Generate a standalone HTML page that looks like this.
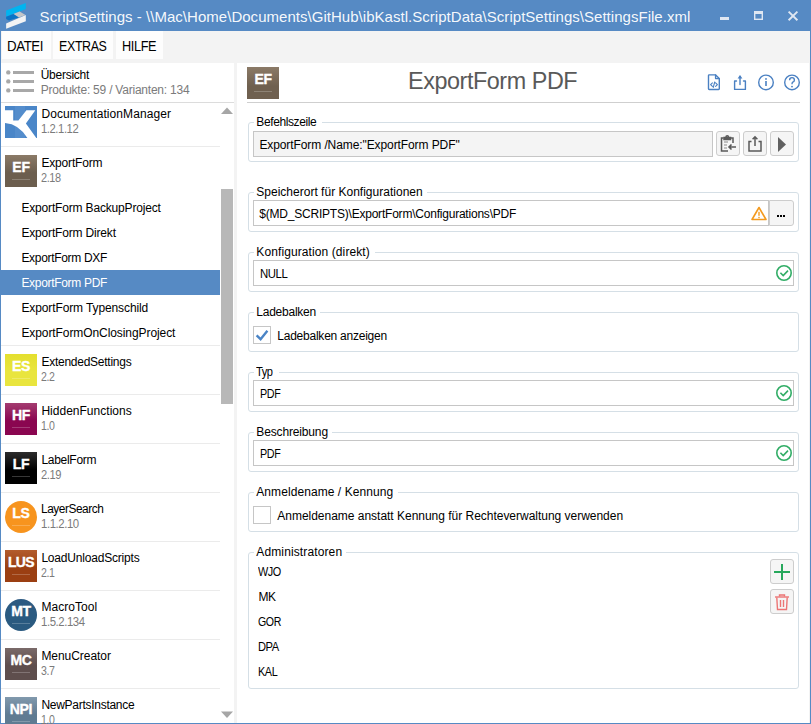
<!DOCTYPE html>
<html><head><meta charset="utf-8">
<style>
html,body{margin:0;padding:0;width:811px;height:724px;overflow:hidden;background:#fff;}
body{position:relative;font-family:"Liberation Sans",sans-serif;}
.a{position:absolute;box-sizing:border-box;}
.t{position:absolute;white-space:pre;font-family:"Liberation Sans",sans-serif;}
.div{position:absolute;height:1px;background:#ebebeb;}
.gb{position:absolute;box-sizing:border-box;border:1px solid #d5dfe6;border-radius:3px;}
.gl{position:absolute;background:#fff;height:12px;}
.inp{position:absolute;box-sizing:border-box;border:1px solid #c6c6c6;background:#fff;}
.btn{position:absolute;box-sizing:border-box;border:1px solid #cdcdcd;background:#f5f5f5;border-radius:3px;}
.ico{position:absolute;width:32px;height:32px;overflow:hidden;color:#fff;font-weight:bold;text-align:center;}
.ico b{position:absolute;left:0;right:0;top:5px;font-size:14px;line-height:14px;letter-spacing:-0.5px;-webkit-text-stroke:0.35px #fff;}
.ico i{position:absolute;left:0;right:0;top:24px;height:1px;}
.ico i:before{content:"";position:absolute;left:7px;right:7px;top:0;height:1px;background:rgba(255,255,255,.22);}
</style></head><body>
<!-- window frame -->
<div class="a" style="left:0;top:0;width:811px;height:31px;background:#568ac4"></div>
<div class="a" style="left:0;top:31px;width:811px;height:693px;background:#f3f3f3"></div>
<div class="a" style="left:0;top:0;width:1px;height:724px;background:#568ac4"></div>
<div class="a" style="left:810px;top:0;width:1px;height:724px;background:#568ac4"></div>
<div class="a" style="left:0;top:723px;width:811px;height:1px;background:#568ac4"></div>
<!-- app logo -->
<svg class="a" style="left:0;top:0" width="32" height="31" viewBox="0 0 32 31">
 <polygon points="6.1,10.5 25.8,2.9 25.8,8.9 6.1,16.8" fill="#00b4f0"/>
 <polygon points="13.4,14.1 19.6,11.5 25.5,15 18.8,17.6" fill="#c4c6c8"/>
 <polygon points="6.1,16.8 13.4,14.1 18.8,17.6 9,20.5 6.1,19" fill="#0a74c6"/>
 <polygon points="6.1,23.4 25.8,15.1 25.8,21.3 6.1,28.8" fill="#f2f3f4"/>
</svg>
<!-- window controls -->
<svg class="a" style="left:700px;top:0" width="110" height="31" viewBox="0 0 110 31">
 <rect x="20" y="17" width="9" height="3" fill="#dfe7f2"/>
 <rect x="54.7" y="12.2" width="7.6" height="7.1" fill="none" stroke="#dfe7f2" stroke-width="1.4"/>
 <rect x="54" y="11" width="9" height="3" fill="#dfe7f2"/>
 <path d="M88.6 11.6 L97.4 20.2 M97.4 11.6 L88.6 20.2" stroke="#dfe7f2" stroke-width="1.9"/>
</svg>
<!-- menu buttons -->
<div class="a" style="left:2px;top:31px;width:49px;height:28px;background:#fdfdfd"></div>
<div class="a" style="left:53px;top:31px;width:60px;height:28px;background:#fdfdfd"></div>
<div class="a" style="left:116px;top:31px;width:47px;height:28px;background:#fdfdfd"></div>
<!-- left panel -->
<div class="a" style="left:1px;top:63px;width:233px;height:660px;background:#fff"></div>
<!-- right panel -->
<div class="a" style="left:237px;top:63px;width:572px;height:660px;background:#fff"></div>

<!-- list header icon -->
<svg class="a" style="left:0;top:64px" width="40" height="34" viewBox="0 0 40 34" fill="#a8a8a8">
 <circle cx="8.3" cy="8.4" r="2.2"/><circle cx="8.3" cy="17.4" r="2.2"/><circle cx="8.3" cy="26.4" r="2.2"/>
 <rect x="13" y="7" width="21" height="3"/><rect x="13" y="16" width="21" height="3"/><rect x="13" y="25" width="21" height="3"/>
</svg>
<div class="a" style="left:1px;top:102px;width:233px;height:1px;background:#dcdcdc"></div>

<!-- list dividers -->
<div class="div" style="left:1px;top:146px;width:219px"></div>
<div class="div" style="left:1px;top:345px;width:219px"></div>
<div class="div" style="left:1px;top:394px;width:219px"></div>
<div class="div" style="left:1px;top:443px;width:219px"></div>
<div class="div" style="left:1px;top:492px;width:219px"></div>
<div class="div" style="left:1px;top:541px;width:219px"></div>
<div class="div" style="left:1px;top:590px;width:219px"></div>
<div class="div" style="left:1px;top:639px;width:219px"></div>
<div class="div" style="left:1px;top:688px;width:219px"></div>
<!-- selected row -->
<div class="a" style="left:1px;top:270px;width:219px;height:25px;background:#568ac4"></div>
<!-- scrollbar -->
<div class="a" style="left:221px;top:189px;width:12px;height:215px;background:#b8b8b8"></div>
<svg class="a" style="left:221px;top:107px" width="12" height="7"><polygon points="0,7 6,0.5 12,7" fill="#a6a6a6"/></svg>
<svg class="a" style="left:221px;top:711px" width="12" height="7"><polygon points="0,0.5 12,0.5 6,7" fill="#a6a6a6"/></svg>

<!-- ICONS -->
<svg class="a" style="left:5px;top:106px" width="32" height="32" viewBox="0 0 32 32">
<rect width="32" height="32" fill="#4a86c8"/>
<rect x="10" y="0" width="10" height="32" fill="#5b93cf" opacity=".6"/>
<path d="M0 4.2 H8.2 V14.4 H13.4 L21.4 4.2 H30.3 L20.9 17.4 L31.3 32 H22.4 Q14 18 0 16.9 Z" fill="#fff"/>
</svg>
<div class="ico" style="left:5px;top:155px;background:linear-gradient(#8b7a67,#6c5e4e 55%);"><b style="font-size:14px;letter-spacing:-0.3px">EF</b><i></i></div>
<div class="ico" style="left:5px;top:354px;background:linear-gradient(#e4df2e,#e9e53e 55%);"><b style="font-size:14px;letter-spacing:-0.3px">ES</b><i></i></div>
<div class="ico" style="left:5px;top:403px;background:linear-gradient(#a43c70,#8a0650 55%);"><b style="font-size:14px;letter-spacing:-0.3px">HF</b><i></i></div>
<div class="ico" style="left:5px;top:452px;background:linear-gradient(#2c2c2c,#000 55%);"><b style="font-size:14px;letter-spacing:-0.3px">LF</b><i></i></div>
<div class="ico" style="left:5px;top:501px;background:linear-gradient(#f7941e,#f7941e 55%);border-radius:16px;"><b style="font-size:14px;letter-spacing:-0.3px">LS</b><i></i></div>
<div class="ico" style="left:5px;top:550px;background:linear-gradient(#b35c2c,#9b3f12 55%);"><b style="font-size:14px;letter-spacing:-0.6px">LUS</b><i></i></div>
<div class="ico" style="left:5px;top:599px;background:linear-gradient(#2d5a82,#2a5a80 55%);border-radius:16px;"><b style="font-size:14px;letter-spacing:-0.3px">MT</b><i></i></div>
<div class="ico" style="left:5px;top:648px;background:linear-gradient(#7a6a69,#5e4e4d 55%);"><b style="font-size:14px;letter-spacing:-0.3px">MC</b><i></i></div>
<div class="ico" style="left:5px;top:697px;background:linear-gradient(#8199ad,#5f7b92 55%);"><b style="font-size:14px;letter-spacing:-0.3px">NPI</b><i></i></div>

<!-- right header -->
<div class="a" style="left:247px;top:102px;width:553px;height:1px;background:#cfcfcf"></div>
<!-- header icon -->
<div class="ico" style="left:247px;top:67px;background:linear-gradient(#8b7a67,#6f604f 60%)"><b>EF</b><i></i></div>
<!-- header action icons -->
<svg class="a" style="left:704px;top:72px" width="100" height="22" viewBox="0 0 100 22">
 <g fill="none" stroke="#4a80c2" stroke-width="1.4" stroke-linejoin="round" stroke-linecap="round">
  <path d="M5.2 2.9 H11.6 L15.3 6.6 V16.8 Q15.3 17.5 14.6 17.5 H5.2 Q4.5 17.5 4.5 16.8 V3.6 Q4.5 2.9 5.2 2.9 Z"/>
  <path d="M11.6 2.9 V6.6 H15.3"/>
  <path d="M8.4 10.8 L6.6 12.6 L8.4 14.4 M11.6 10.8 L13.4 12.6 L11.6 14.4 M10.7 10 L9.3 15.4" stroke-width="1.1"/>
  <path d="M32.5 9 H30.6 V17.4 H41.4 V9 H39.5"/>
  <path d="M36 12.5 V4.5"/><polygon points="33.6,6.6 36,3 38.4,6.6" fill="#4a80c2" stroke="none"/>
  <circle cx="62" cy="10.4" r="7.3"/>
  <circle cx="88" cy="10.4" r="7.3"/>
 </g>
 <rect x="61.2" y="9" width="1.6" height="5" fill="#4a80c2"/>
 <circle cx="62" cy="6.9" r="0.95" fill="#4a80c2"/>
 <path d="M85.6 8.2 Q85.6 5.6 88 5.6 Q90.4 5.6 90.4 7.9 Q90.4 9.4 88.8 10.2 Q88 10.7 88 12.2" fill="none" stroke="#4a80c2" stroke-width="1.4"/>
 <circle cx="88" cy="14.6" r="0.95" fill="#4a80c2"/>
</svg>

<!-- group boxes -->
<div class="gb" style="left:248px;top:122px;width:551px;height:40px"></div>
<div class="gb" style="left:248px;top:192px;width:551px;height:40px"></div>
<div class="gb" style="left:248px;top:252px;width:551px;height:40px"></div>
<div class="gb" style="left:248px;top:312px;width:551px;height:40px"></div>
<div class="gb" style="left:248px;top:372px;width:551px;height:40px"></div>
<div class="gb" style="left:248px;top:432px;width:551px;height:40px"></div>
<div class="gb" style="left:248px;top:492px;width:551px;height:40px"></div>
<div class="gb" style="left:248px;top:552px;width:551px;height:137px"></div>
<!-- label gaps -->
<div class="gl" style="left:254px;top:116px;width:68px"></div>
<div class="gl" style="left:254px;top:186px;width:173px"></div>
<div class="gl" style="left:254px;top:246px;width:121px"></div>
<div class="gl" style="left:254px;top:306px;width:66px"></div>
<div class="gl" style="left:254px;top:366px;width:25px"></div>
<div class="gl" style="left:254px;top:426px;width:78px"></div>
<div class="gl" style="left:254px;top:486px;width:144px"></div>
<div class="gl" style="left:254px;top:546px;width:92px"></div>

<!-- inputs -->
<div class="inp" style="left:253px;top:131px;width:460px;height:26px;background:#f4f4f4"></div>
<div class="btn" style="left:716px;top:131px;width:24px;height:25px"></div>
<div class="btn" style="left:743px;top:131px;width:24px;height:25px"></div>
<div class="btn" style="left:770px;top:131px;width:24px;height:25px"></div>
<svg class="a" style="left:716px;top:131px" width="78" height="25" viewBox="0 0 78 25">
 <g fill="none" stroke="#5a5a5a" stroke-width="1.5">
  <path d="M7.5 7 H5.5 V20 H12"/>
  <path d="M15 7 H17 V12"/>
  <path d="M8 6.5 H14.5 V8.5 H8 Z" fill="#5a5a5a"/>
  <path d="M10 6 Q10 4.8 11.2 4.8 Q12.5 4.8 12.5 6"/>
  <path d="M8 11 H12 M8 14 H11 M8 17 H11" stroke-width="1.2" stroke="#8a8a8a"/>
  <path d="M20 16 H13 M15.5 13.5 L13 16 L15.5 18.5" stroke-width="1.6"/>
  <path d="M35.5 10.5 H33 V20 H45 V10.5 H42.5"/>
  <path d="M39 15 V6 M36.6 8.3 L39 5.8 L41.4 8.3"/>
 </g>
 <polygon points="62,6 70,13.5 62,21" fill="#606060"/>
</svg>

<div class="inp" style="left:253px;top:200px;width:516px;height:26px"></div>
<div class="btn" style="left:769px;top:200px;width:25px;height:26px;border-radius:0 3px 3px 0"></div>
<div class="a" style="left:777px;top:215px;width:2px;height:2px;background:#000;box-shadow:3px 0 #000,6px 0 #000"></div>
<svg class="a" style="left:750px;top:205px" width="18" height="17" viewBox="0 0 18 17">
 <path d="M9 2.5 L16 14.5 H2 Z" fill="none" stroke="#f39a1f" stroke-width="1.6" stroke-linejoin="round"/>
 <rect x="8.3" y="6.8" width="1.4" height="4" fill="#f39a1f"/>
 <rect x="8.3" y="11.8" width="1.4" height="1.4" fill="#f39a1f"/>
</svg>

<div class="inp" style="left:253px;top:260px;width:541px;height:26px"></div>
<div class="inp" style="left:253px;top:380px;width:541px;height:26px"></div>
<div class="inp" style="left:253px;top:440px;width:541px;height:26px"></div>
<svg class="a" style="left:774px;top:263px" width="20" height="20" viewBox="0 0 20 20"><circle cx="10" cy="10" r="7.2" fill="none" stroke="#31ad66" stroke-width="1.6"/><path d="M6.4 9.8 L9.2 12.6 L14 7.6" fill="none" stroke="#31ad66" stroke-width="1.6"/></svg>
<svg class="a" style="left:774px;top:383px" width="20" height="20" viewBox="0 0 20 20"><circle cx="10" cy="10" r="7.2" fill="none" stroke="#31ad66" stroke-width="1.6"/><path d="M6.4 9.8 L9.2 12.6 L14 7.6" fill="none" stroke="#31ad66" stroke-width="1.6"/></svg>
<svg class="a" style="left:774px;top:443px" width="20" height="20" viewBox="0 0 20 20"><circle cx="10" cy="10" r="7.2" fill="none" stroke="#31ad66" stroke-width="1.6"/><path d="M6.4 9.8 L9.2 12.6 L14 7.6" fill="none" stroke="#31ad66" stroke-width="1.6"/></svg>


<!-- checkboxes -->
<div class="a" style="left:253px;top:326px;width:18px;height:18px;border:1px solid #c6c6c6;background:#fff"></div>
<svg class="a" style="left:253px;top:326px" width="18" height="18" viewBox="0 0 18 18"><path d="M3.6 9.4 L7.6 13.2 L14.4 4.8" fill="none" stroke="#4a84c6" stroke-width="2.4"/></svg>
<div class="a" style="left:253px;top:506px;width:18px;height:18px;border:1px solid #c6c6c6;background:#fff"></div>

<!-- admin buttons -->
<div class="btn" style="left:770px;top:559px;width:24px;height:25px"></div>
<div class="btn" style="left:770px;top:589px;width:24px;height:25px"></div>
<div class="a" style="left:774px;top:571px;width:16px;height:2px;background:#27a85c"></div>
<div class="a" style="left:781px;top:564px;width:2px;height:16px;background:#27a85c"></div>
<svg class="a" style="left:770px;top:589px" width="24" height="25" viewBox="0 0 24 25">
 <g fill="none" stroke="#ec7474" stroke-width="1.4">
  <path d="M5 8 H19"/>
  <path d="M9.5 7.5 V6 H14.5 V7.5"/>
  <path d="M6.8 8.5 L7.5 20.5 H16.5 L17.2 8.5"/>
  <path d="M10.5 11 V18 M13.5 11 V18"/>
 </g>
</svg>


<div class="t" style="left:39.60px;top:8px;font-size:15px;line-height:18px;color:rgba(255,255,255,.96);letter-spacing:0.032px;">ScriptSettings - \\Mac\Home\Documents\GitHub\ibKastl.ScriptData\ScriptSettings\SettingsFile.xml</div>
<div class="t" style="left:7.40px;top:38px;font-size:14px;line-height:17px;color:#000;letter-spacing:-0.450px;transform:scaleX(0.9480);transform-origin:1.00px 0;">DATEI</div>
<div class="t" style="left:58.70px;top:38px;font-size:14px;line-height:17px;color:#000;letter-spacing:-0.450px;transform:scaleX(0.8889);transform-origin:1.00px 0;">EXTRAS</div>
<div class="t" style="left:121.60px;top:38px;font-size:14px;line-height:17px;color:#000;letter-spacing:-0.450px;transform:scaleX(0.9086);transform-origin:1.00px 0;">HILFE</div>
<div class="t" style="left:40.70px;top:68px;font-size:12px;line-height:15px;color:#000;letter-spacing:-0.256px;">Übersicht</div>
<div class="t" style="left:40.70px;top:83px;font-size:12px;line-height:15px;color:#7b7b7b;letter-spacing:-0.226px;">Produkte: 59 / Varianten: 134</div>
<div class="t" style="left:41.40px;top:107px;font-size:12px;line-height:15px;color:#000;letter-spacing:0.075px;">DocumentationManager</div>
<div class="t" style="left:41.40px;top:122px;font-size:12px;line-height:15px;color:#7b7b7b;letter-spacing:-0.450px;transform:scaleX(0.9372);transform-origin:0.00px 0;">1.2.1.12</div>
<div class="t" style="left:41.40px;top:156px;font-size:12px;line-height:15px;color:#000;letter-spacing:-0.165px;">ExportForm</div>
<div class="t" style="left:41.40px;top:171px;font-size:12px;line-height:15px;color:#7b7b7b;letter-spacing:-0.450px;transform:scaleX(0.9090);transform-origin:0.00px 0;">2.18</div>
<div class="t" style="left:41.40px;top:355px;font-size:12px;line-height:15px;color:#000;letter-spacing:-0.251px;">ExtendedSettings</div>
<div class="t" style="left:41.40px;top:370px;font-size:12px;line-height:15px;color:#7b7b7b;letter-spacing:-0.450px;transform:scaleX(0.8816);transform-origin:0.00px 0;">2.2</div>
<div class="t" style="left:41.40px;top:404px;font-size:12px;line-height:15px;color:#000;letter-spacing:0.018px;">HiddenFunctions</div>
<div class="t" style="left:41.40px;top:419px;font-size:12px;line-height:15px;color:#7b7b7b;letter-spacing:-0.450px;transform:scaleX(0.8816);transform-origin:0.00px 0;">1.0</div>
<div class="t" style="left:41.40px;top:453px;font-size:12px;line-height:15px;color:#000;letter-spacing:-0.283px;">LabelForm</div>
<div class="t" style="left:41.40px;top:468px;font-size:12px;line-height:15px;color:#7b7b7b;letter-spacing:-0.450px;transform:scaleX(0.9269);transform-origin:0.00px 0;">2.19</div>
<div class="t" style="left:41.40px;top:502px;font-size:12px;line-height:15px;color:#000;letter-spacing:-0.450px;transform:scaleX(0.9894);transform-origin:0.00px 0;">LayerSearch</div>
<div class="t" style="left:41.40px;top:517px;font-size:12px;line-height:15px;color:#7b7b7b;letter-spacing:-0.450px;transform:scaleX(0.9495);transform-origin:0.00px 0;">1.1.2.10</div>
<div class="t" style="left:41.40px;top:551px;font-size:12px;line-height:15px;color:#000;letter-spacing:-0.194px;">LoadUnloadScripts</div>
<div class="t" style="left:41.40px;top:566px;font-size:12px;line-height:15px;color:#7b7b7b;letter-spacing:-0.450px;transform:scaleX(0.8816);transform-origin:0.00px 0;">2.1</div>
<div class="t" style="left:41.40px;top:600px;font-size:12px;line-height:15px;color:#000;letter-spacing:0.052px;">MacroTool</div>
<div class="t" style="left:41.40px;top:615px;font-size:12px;line-height:15px;color:#7b7b7b;letter-spacing:-0.450px;transform:scaleX(0.9493);transform-origin:0.00px 0;">1.5.2.134</div>
<div class="t" style="left:41.40px;top:649px;font-size:12px;line-height:15px;color:#000;letter-spacing:-0.044px;">MenuCreator</div>
<div class="t" style="left:41.40px;top:664px;font-size:12px;line-height:15px;color:#7b7b7b;letter-spacing:-0.450px;transform:scaleX(0.8816);transform-origin:0.00px 0;">3.7</div>
<div class="t" style="left:41.40px;top:698px;font-size:12px;line-height:15px;color:#000;letter-spacing:-0.274px;">NewPartsInstance</div>
<div class="t" style="left:41.40px;top:713px;font-size:12px;line-height:15px;color:#7b7b7b;letter-spacing:-0.450px;transform:scaleX(0.8816);transform-origin:0.00px 0;">1.0</div>
<div class="t" style="left:21.40px;top:201px;font-size:12px;line-height:15px;color:#000;letter-spacing:-0.167px;">ExportForm BackupProject</div>
<div class="t" style="left:21.40px;top:226px;font-size:12px;line-height:15px;color:#000;letter-spacing:-0.170px;">ExportForm Direkt</div>
<div class="t" style="left:21.40px;top:251px;font-size:12px;line-height:15px;color:#000;letter-spacing:-0.314px;">ExportForm DXF</div>
<div class="t" style="left:21.40px;top:276px;font-size:12px;line-height:15px;color:#fff;letter-spacing:-0.314px;">ExportForm PDF</div>
<div class="t" style="left:21.40px;top:301px;font-size:12px;line-height:15px;color:#000;letter-spacing:-0.110px;">ExportForm Typenschild</div>
<div class="t" style="left:21.40px;top:326px;font-size:12px;line-height:15px;color:#000;letter-spacing:-0.081px;">ExportFormOnClosingProject</div>
<div class="t" style="left:407.90px;top:66px;font-size:24px;line-height:29px;color:#595959;letter-spacing:-0.450px;transform:scaleX(0.9738);transform-origin:1.00px 0;">ExportForm PDF</div>
<div class="t" style="left:256.30px;top:115px;font-size:12px;line-height:15px;color:#000;letter-spacing:-0.394px;">Befehlszeile</div>
<div class="t" style="left:256.30px;top:185px;font-size:12px;line-height:15px;color:#000;letter-spacing:0.009px;">Speicherort für Konfigurationen</div>
<div class="t" style="left:256.30px;top:245px;font-size:12px;line-height:15px;color:#000;letter-spacing:0.100px;">Konfiguration (direkt)</div>
<div class="t" style="left:256.30px;top:305px;font-size:12px;line-height:15px;color:#000;letter-spacing:-0.243px;">Ladebalken</div>
<div class="t" style="left:256.30px;top:365px;font-size:12px;line-height:15px;color:#000;letter-spacing:-0.450px;transform:scaleX(0.9218);transform-origin:0.00px 0;">Typ</div>
<div class="t" style="left:256.30px;top:425px;font-size:12px;line-height:15px;color:#000;letter-spacing:-0.146px;">Beschreibung</div>
<div class="t" style="left:256.30px;top:485px;font-size:12px;line-height:15px;color:#000;letter-spacing:0.072px;">Anmeldename / Kennung</div>
<div class="t" style="left:256.30px;top:545px;font-size:12px;line-height:15px;color:#000;letter-spacing:0.124px;">Administratoren</div>
<div class="t" style="left:259.40px;top:138px;font-size:12px;line-height:15px;color:#000;letter-spacing:-0.093px;">ExportForm /Name:&quot;ExportForm PDF&quot;</div>
<div class="t" style="left:259.30px;top:207px;font-size:12px;line-height:15px;color:#000;letter-spacing:-0.215px;">$(MD_SCRIPTS)\ExportForm\Configurations\PDF</div>
<div class="t" style="left:259.60px;top:267px;font-size:12px;line-height:15px;color:#000;letter-spacing:-0.450px;transform:scaleX(0.9475);transform-origin:0.00px 0;">NULL</div>
<div class="t" style="left:259.60px;top:387px;font-size:12px;line-height:15px;color:#000;letter-spacing:-0.450px;transform:scaleX(0.8959);transform-origin:0.00px 0;">PDF</div>
<div class="t" style="left:259.60px;top:447px;font-size:12px;line-height:15px;color:#000;letter-spacing:-0.450px;transform:scaleX(0.8959);transform-origin:0.00px 0;">PDF</div>
<div class="t" style="left:277.30px;top:329px;font-size:12px;line-height:15px;color:#000;letter-spacing:-0.235px;">Ladebalken anzeigen</div>
<div class="t" style="left:277.30px;top:509px;font-size:12px;line-height:15px;color:#000;letter-spacing:-0.019px;">Anmeldename anstatt Kennung für Rechteverwaltung verwenden</div>
<div class="t" style="left:258.40px;top:565px;font-size:12px;line-height:15px;color:#000;letter-spacing:-0.450px;transform:scaleX(0.9046);transform-origin:0.00px 0;">WJO</div>
<div class="t" style="left:258.40px;top:590px;font-size:12px;line-height:15px;color:#000;letter-spacing:-0.396px;">MK</div>
<div class="t" style="left:258.40px;top:615px;font-size:12px;line-height:15px;color:#000;letter-spacing:-0.450px;transform:scaleX(0.8817);transform-origin:0.00px 0;">GOR</div>
<div class="t" style="left:258.40px;top:640px;font-size:12px;line-height:15px;color:#000;letter-spacing:-0.450px;transform:scaleX(0.9266);transform-origin:0.00px 0;">DPA</div>
<div class="t" style="left:258.40px;top:665px;font-size:12px;line-height:15px;color:#000;letter-spacing:-0.450px;transform:scaleX(0.9047);transform-origin:0.00px 0;">KAL</div>
</body></html>
